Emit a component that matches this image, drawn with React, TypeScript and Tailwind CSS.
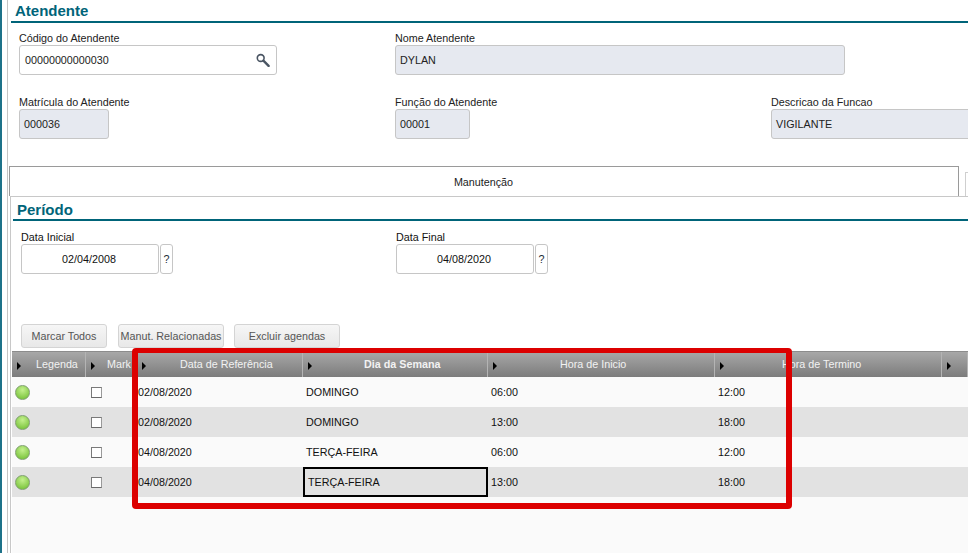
const columns = [
  { label: 'Legenda', width: 'w-[74px]', text: 'pl-[24px]' },
  { label: 'Mark', width: 'w-[51px]', text: 'pl-[21px]' },
  { label: 'Data de Referência', width: 'w-[166px]', text: 'pl-[43px]' },
  { label: 'Dia da Semana', width: 'w-[185px]', text: 'pl-[61px] font-bold' },
  { label: 'Hora de Inicio', width: 'w-[227px]', text: 'pl-[72px]' },
  { label: 'Hora de Termino', width: 'w-[227px]', text: 'pl-[67px]' },
  { label: '', width: 'w-[26px]', text: '' },
];

const rows = [
  { data: '02/08/2020', dia: 'DOMINGO', inicio: '06:00', termino: '12:00' },
  { data: '02/08/2020', dia: 'DOMINGO', inicio: '13:00', termino: '18:00' },
  { data: '04/08/2020', dia: 'TERÇA-FEIRA', inicio: '06:00', termino: '12:00' },
  { data: '04/08/2020', dia: 'TERÇA-FEIRA', inicio: '13:00', termino: '18:00' },
];

function SearchIcon() {
  return (
    <svg width="14" height="14" viewBox="0 0 14 14" fill="none" stroke="#4a5563" className="shrink-0">
      <circle cx="4.7" cy="5" r="3.4" strokeWidth="1.6" />
      <path d="M7.4 7.7L12.6 12.9" strokeWidth="2.4" strokeLinecap="round" />
    </svg>
  );
}

function Field({ label, value, width, readOnly, icon, className }: {
  label: string;
  value: string;
  width: string;
  readOnly?: boolean;
  icon?: boolean;
  className?: string;
}) {
  return (
    <div className={`${width} ${className ?? ''} shrink-0`}>
      <div className="h-[16px] leading-[19px] text-[#222] whitespace-nowrap">{label}</div>
      <div
        className={`h-[30px] rounded-[3px] border border-[#c6c6c6] flex items-center justify-between pr-[6px] text-[#222] ${
          readOnly ? 'bg-[#e6e9f0] pl-[4px]' : 'bg-white pl-[5px]'
        }`}
      >
        <span>{value}</span>
        {icon && <SearchIcon />}
      </div>
    </div>
  );
}

function DateField({ label, value, className }: { label: string; value: string; className?: string }) {
  return (
    <div className={`shrink-0 ${className ?? ''}`}>
      <div className="h-[16px] leading-[19px] text-[#111]">{label}</div>
      <div className="flex gap-[1px]">
        <div className="w-[138px] h-[30px] pr-[2px] rounded-[3px] border border-[#c6c6c6] bg-white flex items-center justify-center text-[#111]">
          {value}
        </div>
        <div className="w-[13px] h-[30px] rounded-[3px] border border-[#c6c6c6] bg-white flex items-center justify-center text-[#222b36]">
          ?
        </div>
      </div>
    </div>
  );
}

function Arrow() {
  return <span className="absolute left-[5px] top-[10px] w-0 h-0 border-y-[4px] border-y-transparent border-l-[4px] border-l-black" />;
}

function ActionButton({ label, width, className }: { label: string; width: string; className?: string }) {
  return (
    <div className={`${width} ${className ?? ''} h-[24px] rounded-[3px] border border-[#d4d4d4] bg-gradient-to-b from-[#f6f6f6] to-[#e8e8e8] flex items-center justify-center text-[#555] whitespace-nowrap`}>
      {label}
    </div>
  );
}

export default function App() {
  return (
    <div className="relative w-[968px] h-[553px] overflow-hidden bg-white text-[10.75px] flex" style={{ fontFamily: '"Liberation Sans", Arial, sans-serif' }}>
      {/* Left frame lines */}
      <div className="w-[2px] shrink-0 bg-[#1d7289]" />
      <div className="w-[5px] shrink-0 bg-white" />
      <div className="w-[1px] shrink-0 bg-[#c4c4c4]" />

      <div className="flex-1 min-w-0">
        {/* Atendente */}
        <div className="pl-[3px]">
          <h1 className="h-[21px] pl-[4px] pt-[1px] text-[15px] leading-[20px] font-bold text-[#006479]">Atendente</h1>
          <div className="h-[2px] bg-[#006479]" />
        </div>
        <div className="pl-[11px] pt-[6px]">
          <div className="flex">
            <Field label="Código do Atendente" value="00000000000030" width="w-[258px]" icon />
            <Field label="Nome Atendente" value="DYLAN" width="w-[450px]" readOnly className="ml-[118px]" />
          </div>
          <div className="flex mt-[18px]">
            <Field label="Matrícula do Atendente" value="000036" width="w-[90px]" readOnly />
            <Field label="Função do Atendente" value="00001" width="w-[75px]" readOnly className="ml-[286px]" />
            <Field label="Descricao da Funcao" value="VIGILANTE" width="w-[210px]" readOnly className="ml-[301px]" />
          </div>
        </div>

        {/* Tabs */}
        <div className="flex items-end mt-[27px] pl-[1px] h-[30px]">
          <div className="w-[950px] shrink-0 h-[30px] border border-b-0 border-[#9a9a9a] flex items-center justify-center text-[#222] pr-[1px] pt-[2px]">
            Manutenção
          </div>
          <div className="w-[20px] shrink-0 h-[24px] ml-[6px] border border-b-0 border-[#cfcfcf]" />
        </div>

        {/* Periodo */}
        <div className="ml-[2px] h-[357px] border-l border-t border-[#c8c8c8] relative">
          <div className="pl-[2px]">
            <h2 className="h-[22px] pl-[4px] pt-[3px] text-[15px] leading-[19px] font-bold text-[#006479]">Período</h2>
            <div className="h-[2px] bg-[#006479]" />
          </div>
          <div className="flex pl-[10px] pt-[7px]">
            <DateField label="Data Inicial" value="02/04/2008" />
            <DateField label="Data Final" value="04/08/2020" className="ml-[223px]" />
          </div>
          <div className="flex pl-[10px] mt-[50px]">
            <ActionButton label="Marcar Todos" width="w-[86px]" />
            <ActionButton label="Manut. Relacionadas" width="w-[106px]" className="ml-[11px]" />
            <ActionButton label="Excluir agendas" width="w-[106px]" className="ml-[10px]" />
          </div>

          {/* Grid */}
          <div className="mt-[3px] ml-[1px] h-[202px] bg-[#fafafa]">
            <div className="flex h-[26px] border-t border-[#8c8c8c] bg-gradient-to-b from-[#a8a8a8] to-[#7c7c7c]">
              {columns.map((col, i) => (
                <div key={i} className={`${col.width} ${col.text} relative shrink-0 border-r border-[#b4b4b4] leading-[25px] text-[#f2f2f2] whitespace-nowrap overflow-hidden`}>
                  <Arrow />
                  {col.label}
                </div>
              ))}
            </div>
            {rows.map((row, i) => (
              <div key={i} className={`flex h-[30px] items-center text-[#111] ${i % 2 ? 'bg-[#e2e2e2]' : 'bg-[#fafafa]'}`}>
                <div className="w-[74px] shrink-0 pl-[3px]">
                  <div className="w-[15px] h-[15px] rounded-full border border-[#7f9f70] bg-[radial-gradient(circle_at_50%_30%,#c4f08e,#6cbb2c)]" />
                </div>
                <div className="w-[51px] shrink-0 pl-[5px]">
                  <div className="w-[11px] h-[11px] bg-white border border-t-[#7a7a7a] border-l-[#7a7a7a] border-r-[#9a9a9a] border-b-[#6a6a6a]" />
                </div>
                <div className="w-[166px] shrink-0 pl-[1px]">{row.data}</div>
                <div className={`w-[185px] shrink-0 h-[30px] flex items-center pl-[3px] ${i === 3 ? 'border-2 border-black' : ''}`}>{row.dia}</div>
                <div className="w-[227px] shrink-0 pl-[3px]">{row.inicio}</div>
                <div className="w-[227px] shrink-0 pl-[3px]">{row.termino}</div>
              </div>
            ))}
          </div>
        </div>
      </div>

      {/* Red highlight drawn over the grid */}
      <div className="absolute left-[132px] top-[348px] w-[660px] h-[161px] border-[6px] border-t-[5px] border-[#dc0000] rounded-[4px]" />
    </div>
  );
}
